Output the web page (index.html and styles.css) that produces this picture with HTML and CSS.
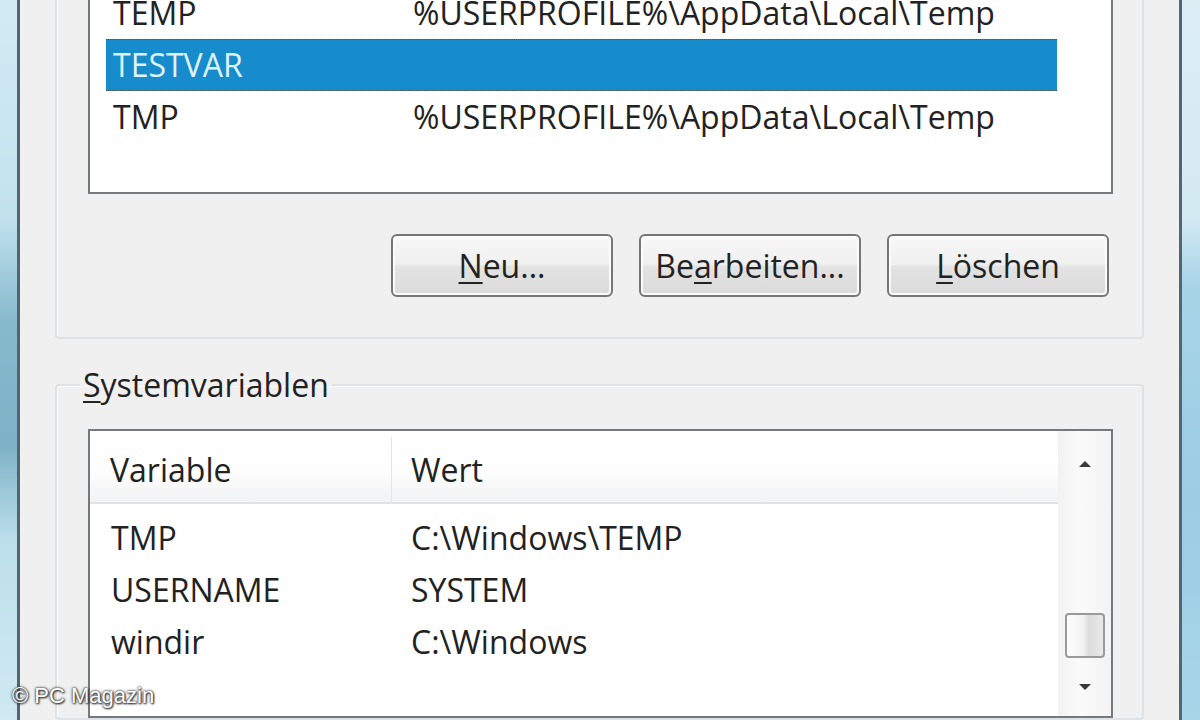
FILE: index.html
```html
<!DOCTYPE html>
<html lang="de">
<head>
<meta charset="UTF-8">
<title>Umgebungsvariablen</title>
<link rel="stylesheet" href="styles.css">
</head>
<body>

<div class="glass glass-left"></div>

<div class="dialog">

<!-- Benutzervariablen -->
<div class="group user-group">
<div class="listbox user-list">
<div class="row"><span class="col-name">TEMP</span><span class="col-value">%USERPROFILE%\AppData\Local\Temp</span></div>
<div class="row selected"><span class="col-name">TESTVAR</span><span class="col-value"></span></div>
<div class="row"><span class="col-name">TMP</span><span class="col-value">%USERPROFILE%\AppData\Local\Temp</span></div>
</div>
<div class="buttons">
<button class="btn"><u>N</u>eu...</button>
<button class="btn">Be<u>a</u>rbeiten...</button>
<button class="btn"><u>L</u>öschen</button>
</div>
</div>

<!-- Systemvariablen -->
<fieldset class="group sys-group">
<legend><u>S</u>ystemvariablen</legend>
<div class="listbox sys-list">
<div class="list-main">
<div class="list-head">
<span class="col-name">Variable</span>
<span class="col-value">Wert</span>
</div>
<div class="sys-rows">
<div class="row"><span class="col-name">TMP</span><span class="col-value">C:\Windows\TEMP</span></div>
<div class="row"><span class="col-name">USERNAME</span><span class="col-value">SYSTEM</span></div>
<div class="row"><span class="col-name">windir</span><span class="col-value">C:\Windows</span></div>
</div>
</div>
<div class="scrollbar">
<div class="arrow arrow-up">
<svg width="14" height="8" viewBox="0 0 14 8"><path d="M1 7 L7 1 L13 7 Z" fill="#3a3a3a"/></svg>
</div>
<div class="track"><div class="thumb"></div></div>
<div class="arrow arrow-down">
<svg width="14" height="8" viewBox="0 0 14 8"><path d="M1 1 L13 1 L7 7 Z" fill="#3a3a3a"/></svg>
</div>
</div>
</div>
</fieldset>

</div>

<div class="glass glass-right"></div>

<div class="watermark">© PC Magazin</div>

</body>
</html>
```

FILE: styles.css
```css
body{
margin:0;
width:1200px;
height:720px;
overflow:hidden;
display:flex;
position:relative;
font-family:"Open Sans","Noto Sans",sans-serif;
font-size:32px;
color:#222;
background:#f0f0f0;
}

/* Fensterrahmen */
.glass{
height:720px;
flex:none;
}

.glass-left{
width:17px;
background:linear-gradient(#d3ebf4 0%,#c2e2ee 30%,#86b9cc 45%,#7fb2c6 62%,#bcdfeb 75%,#d0e9f2 100%);
}

.glass-right{
width:18px;
background:linear-gradient(#dcedf4 0%,#d4eaf3 30%,#a7d3e7 40%,#9ccde4 70%,#a9d5e9 100%);
}

.dialog{
width:1159px;
flex:none;
border-left:3px solid #516573;
border-right:3px solid #516573;
background:#f0f0f0;
padding:0 35px;
box-sizing:content-box;
width:1089px;
}

/* Gruppen */
.group{
border:2px solid #dce2e5;
border-radius:4px;
box-shadow:inset 1px 1px 0 #fafafa;
}

.user-group{
margin-top:-37px;
padding:19px 29px 40px 31px;
}

.sys-group{
margin:26px 0 0 0;
padding:0 29px 0 31px;
min-width:0;
}

.sys-group legend{
line-height:40px;
padding:0 3px;
margin-left:-8px;
}

u{
text-decoration-thickness:2px;
text-underline-offset:4px;
}

/* Listen */
.listbox{
border:2px solid #74797e;
background:#fff;
box-sizing:border-box;
}

.user-list{
height:210px;
padding-top:1px;
}

.row{
display:flex;
height:52px;
line-height:52px;
white-space:nowrap;
}

.col-name{
width:300px;
flex:none;
}

.user-list .row{
margin-left:16px;
width:951px;
padding-left:7px;
box-sizing:border-box;
}

.user-list .row.selected{
background:#168ccd;
color:#dff3fb;
border-top:1px dotted #3a5566;
border-bottom:1px dotted #3a5566;
line-height:50px;
}

/* Buttons */
.buttons{
display:flex;
justify-content:flex-end;
gap:26px;
margin:40px 4px 0 0;
}

.btn{
width:222px;
height:63px;
font-family:inherit;
font-size:32px;
color:#222;
border:2px solid #767676;
border-radius:6px;
background:linear-gradient(#f9f9f9 0%,#efefef 48%,#e3e3e3 52%,#dadada 100%);
box-shadow:inset 0 0 0 2px #fbfbfb;
padding:0;
}

/* Systemliste */
.sys-list{
margin-top:24px;
height:289px;
display:flex;
}

.list-main{
width:968px;
flex:none;
}

.list-head{
display:flex;
height:73px;
padding-top:6px;
line-height:66px;
box-sizing:border-box;
background:linear-gradient(#fff 0%,#fdfdfd 55%,#f2f3f4 100%);
border-bottom:2px solid #e1e3e5;
}

.list-head .col-name{
width:302px;
padding-left:20px;
box-sizing:border-box;
border-right:1px solid #e3e5e7;
}

.list-head .col-value{
padding-left:19px;
}

.sys-rows{
padding-top:8px;
}

.sys-rows .row{
padding-left:21px;
}

/* Scrollbar */
.scrollbar{
flex:1;
display:flex;
flex-direction:column;
background:linear-gradient(90deg,#f2f2f2,#fafafa 40%,#f3f3f3);
}

.arrow{
display:flex;
align-items:center;
justify-content:center;
flex:none;
}

.arrow-up{
height:66px;
}

.arrow-down{
height:58px;
}

.track{
flex:1;
display:flex;
flex-direction:column;
justify-content:flex-end;
align-items:center;
}

.thumb{
width:40px;
height:45px;
border:2px solid #9a9a9a;
border-radius:4px;
box-sizing:border-box;
background:linear-gradient(90deg,#fdfdfd,#f2f2f2 45%,#dcdcdc 60%,#e9e9e9);
}

/* Wasserzeichen */
.watermark{
position:absolute;
left:12px;
top:683px;
font-family:"Liberation Sans",Arial,sans-serif;
font-size:22px;
color:#fff;
text-shadow:0 0 2px #333,0 0 3px #555,1px 1px 2px #222;
}
```
